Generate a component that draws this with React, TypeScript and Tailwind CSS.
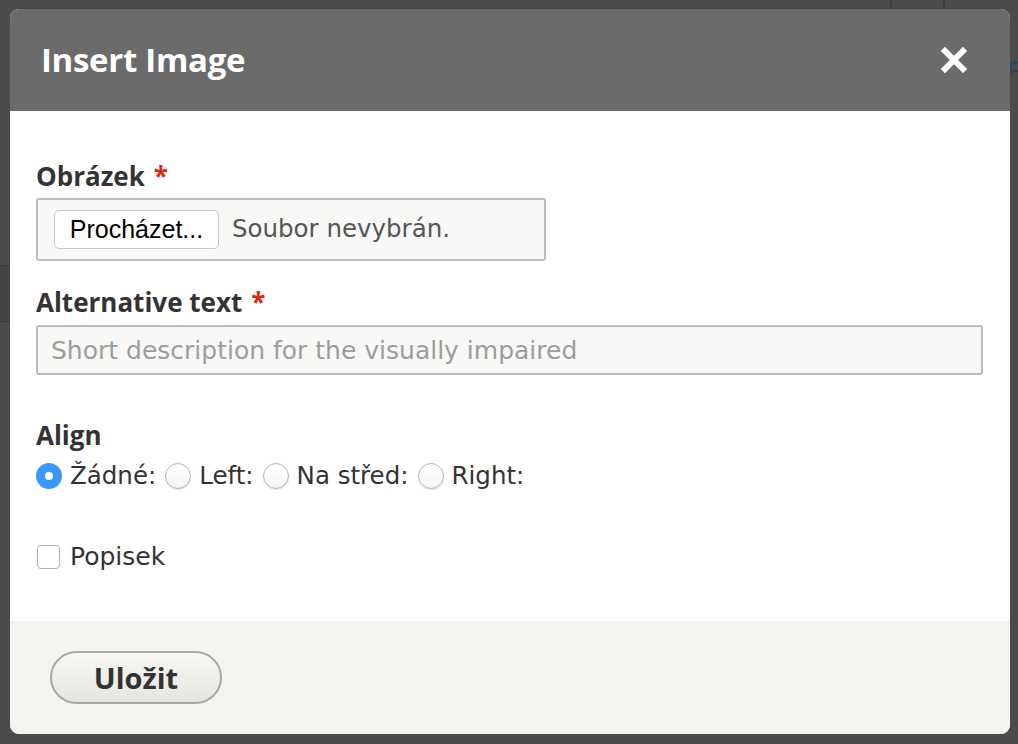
import { useState } from 'react'

const sans = { fontFamily: '"Open Sans", "Noto Sans", Arial, sans-serif' }
const lucida = { fontFamily: '"DejaVu Sans", Verdana, sans-serif' }

function Radio({ checked, label, onClick }: { checked: boolean; label: string; onClick: () => void }) {
  return (
    <label className="flex items-center cursor-pointer" onClick={onClick}>
      {checked ? (
        <span className="w-[26px] h-[26px] rounded-full bg-[#3a98fb] flex items-center justify-center">
          <span className="w-[8px] h-[8px] rounded-full bg-white" />
        </span>
      ) : (
        <span className="w-[26px] h-[26px] rounded-full bg-gradient-to-b from-white to-[#f4f4f4] border border-[#b5b5b5] shadow-[0_1px_1px_rgba(0,0,0,0.12)]" />
      )}
      <span className="ml-[8px] mr-[9px] text-[24.5px] text-[#333]" style={lucida}>
        {label}
      </span>
    </label>
  )
}

export default function App() {
  const [align, setAlign] = useState('none')
  const [caption, setCaption] = useState(false)

  const options = [
    { id: 'none', label: 'Žádné:' },
    { id: 'left', label: 'Left:' },
    { id: 'center', label: 'Na střed:' },
    { id: 'right', label: 'Right:' },
  ]

  return (
    <div className="relative w-[1018px] h-[744px] bg-[#4b4b4b] overflow-hidden" style={sans}>
      {/* page behind the overlay */}
      <div className="absolute left-[890px] top-0 w-[2px] h-[10px] bg-[#3e3e3e]" />
      <div className="absolute left-[943px] top-0 w-[2px] h-[10px] bg-[#3e3e3e]" />
      <div className="absolute left-[1010px] top-[70px] w-[8px] h-[2px] bg-[#3e3e3e]" />
      <div className="absolute left-[0px] top-[265px] w-[10px] h-[57px] bg-[#454545] border-y border-[#3c3c3c]" />
      <svg className="absolute left-[1010px] top-[60px]" width="8" height="16" viewBox="0 0 8 16">
        <path d="M3 3 A5 5 0 0 1 8 3 M3 3 A6 6 0 0 0 3 13" stroke="#1d4a6e" strokeWidth="3" fill="none" />
      </svg>

      <div className="absolute left-[10px] top-[9px] w-[1000px] h-[725px] rounded-[9px] overflow-hidden flex flex-col bg-white">
        <div className="h-[102px] bg-[#6b6b6b] flex items-center justify-between pl-[31px] pr-[43px]">
          <h1 className="text-[33px] font-bold text-white tracking-[-0.3px]">Insert Image</h1>
          <button className="text-white">
            <svg width="26" height="26" viewBox="0 0 26 26">
              <path d="M4 4 L22 22 M22 4 L4 22" stroke="white" strokeWidth="6" strokeLinecap="square" />
            </svg>
          </button>
        </div>

        <div className="flex-1 bg-white px-[26px] pt-[47px]">
          <div className="flex items-center text-[26px] leading-[36px] font-bold text-[#333]">
            Obrázek <span className="ml-[9px] text-[#e1260f]">*</span>
          </div>
          <div className="mt-[4px] w-[510px] h-[63px] rounded-[3px] border-2 border-[#bcbcbc] bg-[#f8f8f6] flex items-center pl-[16px]">
            <button
              className="h-[39px] w-[165px] rounded-[5px] border border-[#c8c8c8] bg-white text-[25px] text-black"
              style={{ fontFamily: '"Liberation Sans", Arial, sans-serif' }}
            >
              Procházet...
            </button>
            <span className="ml-[13px] text-[24.5px] text-[#555]" style={lucida}>
              Soubor nevybrán.
            </span>
          </div>

          <div className="mt-[23px] flex items-center text-[26px] leading-[36px] font-bold text-[#333]">
            Alternative text <span className="ml-[9px] text-[#e1260f]">*</span>
          </div>
          <input
            className="mt-[5px] w-[947px] h-[50px] rounded-[3px] border-2 border-[#bcbcbc] bg-[#f8f8f6] px-[13px] text-[25px] text-[#333] placeholder:text-[#9d9d9d] outline-none"
            style={lucida}
            placeholder="Short description for the visually impaired"
          />

          <div className="mt-[43px] text-[26px] leading-[34px] font-bold text-[#333]">Align</div>
          <div className="mt-[6px] flex items-center">
            {options.map((o) => (
              <Radio key={o.id} checked={align === o.id} label={o.label} onClick={() => setAlign(o.id)} />
            ))}
          </div>

          <label className="mt-[43px] flex items-center cursor-pointer" onClick={() => setCaption(!caption)}>
            <span
              className={`ml-[1px] w-[23px] h-[24px] rounded-[4px] border border-[#b0b0b0] ${
                caption ? 'bg-[#3a98fb]' : 'bg-white'
              }`}
            />
            <span className="ml-[10px] text-[25px] text-[#333]" style={lucida}>
              Popisek
            </span>
          </label>
        </div>

        <div className="h-[113px] bg-[#f3f3ef] flex items-center pl-[40px]">
          <button className="w-[172px] h-[53px] rounded-full border-2 border-[#a8a8a8] bg-gradient-to-b from-[#f7f7f4] to-[#e6e6e1] text-[29px] font-bold text-[#333]">
            Uložit
          </button>
        </div>
      </div>
    </div>
  )
}
